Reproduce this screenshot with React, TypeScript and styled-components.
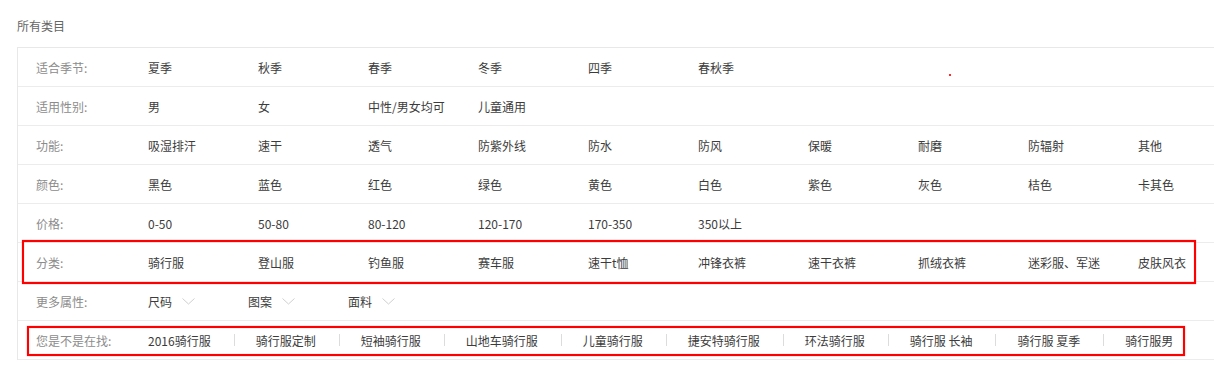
import React from "react";
import styled, { createGlobalStyle, css } from "styled-components";

type Frame = { top: number; right: number; bottom: number; left: number };

type AttrRow = {
    label: string;
    values: string[];
    frame?: Frame;
};

const ATTR_ROWS: AttrRow[] = [
    { label: "适合季节:", values: ["夏季", "秋季", "春季", "冬季", "四季", "春秋季"] },
    { label: "适用性别:", values: ["男", "女", "中性/男女均可", "儿童通用"] },
    {
        label: "功能:",
        values: ["吸湿排汗", "速干", "透气", "防紫外线", "防水", "防风", "保暖", "耐磨", "防辐射", "其他"],
    },
    {
        label: "颜色:",
        values: ["黑色", "蓝色", "红色", "绿色", "黄色", "白色", "紫色", "灰色", "桔色", "卡其色"],
    },
    { label: "价格:", values: ["0-50", "50-80", "80-120", "120-170", "170-350", "350以上"] },
    {
        label: "分类:",
        values: ["骑行服", "登山服", "钓鱼服", "赛车服", "速干t恤", "冲锋衣裤", "速干衣裤", "抓绒衣裤", "迷彩服、军迷", "皮肤风衣"],
        frame: { top: -3, right: 18, bottom: -3, left: 4 },
    },
];

const MORE_ATTRS = ["尺码", "图案", "面料"];

const SUGGESTIONS = [
    "2016骑行服",
    "骑行服定制",
    "短袖骑行服",
    "山地车骑行服",
    "儿童骑行服",
    "捷安特骑行服",
    "环法骑行服",
    "骑行服 长袖",
    "骑行服 夏季",
    "骑行服男",
];

const Chevron = () => (
    <svg width="13" height="7" viewBox="0 0 13 7" fill="none">
        <polyline points="0.5,0.5 6.5,6 12.5,0.5" stroke="#cfcfcf" strokeWidth="1" />
    </svg>
);

export default function App() {
    return (
        <>
            <GlobalStyle />
            <Page>
                <Title>所有类目</Title>
                <Panel>
                    {ATTR_ROWS.map(row => (
                        <Row key={row.label} $frame={row.frame}>
                            <Label>{row.label}</Label>
                            {row.values.map(value => (
                                <Value key={value}>{value}</Value>
                            ))}
                        </Row>
                    ))}

                    <FlexRow>
                        <Label>更多属性:</Label>
                        {MORE_ATTRS.map(name => (
                            <Dropdown key={name}>
                                {name}
                                <Chevron />
                            </Dropdown>
                        ))}
                    </FlexRow>

                    <FlexRow $frame={{ top: 5, right: 29, bottom: 3, left: 9 }}>
                        <Label>您是不是在找:</Label>
                        {SUGGESTIONS.map((text, i) => (
                            <React.Fragment key={text}>
                                {i > 0 && <Divider />}
                                <Suggestion>{text}</Suggestion>
                            </React.Fragment>
                        ))}
                    </FlexRow>

                    <StrayDot />
                </Panel>
            </Page>
        </>
    );
}

const GlobalStyle = createGlobalStyle`
    html, body {
        margin: 0;
        padding: 0;
        background: #ffffff;
        overflow: hidden;
    }
    body {
        font-family: "Noto Sans CJK SC", "Liberation Sans", sans-serif;
        font-size: 12px;
        color: #333;
    }
`;

const Page = styled.div`
    width: 1214px;
    height: 366px;
`;

const Title = styled.div`
    height: 47px;
    box-sizing: border-box;
    padding: 4px 0 0 17px;
    display: flex;
    align-items: center;
    color: #666;
    font-size: 12px;
`;

const Panel = styled.div`
    position: relative;
    margin-left: 17px;
    border-top: 1px solid #e8e8e8;
    border-left: 1px solid #e8e8e8;
`;

const frameStyle = css<{ $frame?: Frame }>`
    ${({ $frame }) =>
        $frame &&
        css`
            &::after {
                content: "";
                position: absolute;
                top: ${$frame.top}px;
                right: ${$frame.right}px;
                bottom: ${$frame.bottom}px;
                left: ${$frame.left}px;
                border: 2px solid #ff0000;
                box-shadow: 0 0 1px rgba(255, 0, 0, 0.6), inset 0 0 1px rgba(255, 0, 0, 0.6);
                pointer-events: none;
            }
        `}
`;

const Row = styled.div<{ $frame?: Frame }>`
    position: relative;
    display: grid;
    grid-template-columns: 112px repeat(10, 110px);
    align-items: center;
    height: 38px;
    padding-left: 18px;
    border-bottom: 1px solid #ececec;
    ${frameStyle}
`;

const FlexRow = styled.div<{ $frame?: Frame }>`
    position: relative;
    display: flex;
    align-items: center;
    height: 38px;
    padding-left: 18px;
    border-bottom: 1px solid #ececec;
    ${frameStyle}
`;

const Label = styled.span`
    width: 112px;
    flex-shrink: 0;
    color: #8c8c8c;
    white-space: nowrap;
`;

const Value = styled.span`
    color: #3c3c3c;
    white-space: nowrap;
`;

const Dropdown = styled.span`
    width: 100px;
    display: flex;
    align-items: center;
    gap: 10px;
    color: #3c3c3c;

    svg {
        margin-top: 1px;
    }
`;

const Suggestion = styled.span`
    color: #3c3c3c;
    white-space: nowrap;
`;

const Divider = styled.span`
    width: 1px;
    height: 12px;
    background: #dcdcdc;
    margin: 0 21px 0 23px;
`;

const StrayDot = styled.span`
    position: absolute;
    left: 931px;
    top: 26px;
    width: 2px;
    height: 2px;
    background: #ff2a2a;
`;
